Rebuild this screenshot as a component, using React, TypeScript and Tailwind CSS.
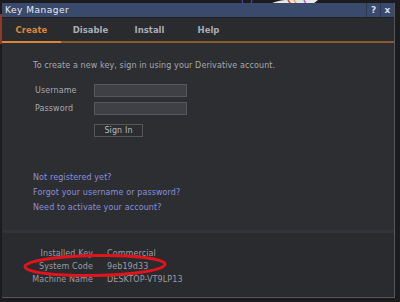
import React from 'react';

const tabs = ['Create', 'Disable', 'Install', 'Help'];

const links = [
    'Not registered yet?',
    'Forgot your username or password?',
    'Need to activate your account?'
];

const info = [
    {label: 'Installed Key', value: 'Commercial'},
    {label: 'System Code', value: '9eb19d33'},
    {label: 'Machine Name', value: 'DESKTOP-VT9LP13'}
];

const App: React.FC = () => {
    return (
        <div
            className="relative w-[400px] h-[302px] bg-[#1c1c1f] overflow-hidden"
            style={{fontFamily: '"DejaVu Sans", Verdana, sans-serif'}}
        >
            {/* bits of the app behind the window */}
            <svg className="absolute left-0 top-0" width="400" height="10">
                <circle cx="247" cy="0" r="5" fill="none" stroke="#5a4fc8" strokeWidth="1"/>
                <path d="M266 6 Q280 -2 300 0 L318 0 Q312 6 300 7 Z" fill="#e8e8e8"/>
                <path d="M288 0 L292 6" stroke="#e0502a" strokeWidth="1.5"/>
                <path d="M294 0 L297 5" stroke="#e8b43a" strokeWidth="1.5"/>
                <path d="M304 0 L306 4" stroke="#b060c0" strokeWidth="1.5"/>
            </svg>
            <div className="absolute left-0 top-[14px] w-[2px] h-[30px] bg-[#8a3a30]"/>

            {/* window */}
            <div className="absolute left-[2px] top-[3px] w-[393px] h-[295px] flex flex-col border-r border-b border-[#55575c] bg-[#2a2b2f]">
                {/* title bar */}
                <div className="h-[15px] flex items-stretch bg-[#3a4a6c] border-b border-[#222]">
                    <div className="flex-1 pl-[3px] text-[9px] leading-[15px] tracking-[0.5px] text-[#e6e8ee]">
                        Key Manager
                    </div>
                    <div className="w-[14px] border-l border-[#2c3850] text-[9px] font-bold leading-[15px] text-center text-[#d8dce6]">?</div>
                    <div className="w-[14px] border-l border-[#2c3850] text-[9px] font-bold leading-[15px] text-center text-[#d8dce6]">x</div>
                </div>

                {/* tabs */}
                <div className="h-[25px] flex bg-[#2a2b2f] border-b-2 border-[#8a5a30]">
                    {tabs.map((tab, i) => (
                        <div
                            key={tab}
                            className={`relative w-[59px] h-full flex items-center justify-center text-[8.5px] font-bold ${
                                i === 0 ? 'text-[#d9863a]' : 'text-[#a9acb4]'
                            }`}
                        >
                            <span className="relative top-[1px]">{tab}</span>
                            {i === 0 && <div className="absolute left-0 right-0 bottom-[-2px] h-[2px] bg-[#d9863a]"/>}
                        </div>
                    ))}
                </div>

                {/* content */}
                <div className="h-[190px] bg-[#2d2e32] border-b-[3px] border-[#323338] pl-[31px] pt-[17px] text-[8px] tracking-[0.1px] text-[#a6a9b0]">
                    <div>To create a new key, sign in using your Derivative account.</div>
                    <div className="mt-[12px] flex flex-col gap-[5px] pl-[2px]">
                        <div className="flex items-center">
                            <span className="w-[59px]">Username</span>
                            <div className="w-[93px] h-[13px] bg-[#3e4045] border border-[#55575c]"/>
                        </div>
                        <div className="flex items-center">
                            <span className="w-[59px]">Password</span>
                            <div className="w-[93px] h-[13px] bg-[#3e4045] border border-[#55575c]"/>
                        </div>
                        <div className="flex">
                            <div className="ml-[59px] mt-[4px] w-[49px] h-[13px] border border-[#55575c] bg-[#2c2d31] text-[8px] leading-[11px] text-center text-[#b8bbc2]">
                                Sign In
                            </div>
                        </div>
                    </div>
                    <div className="mt-[35px] flex flex-col gap-[3px] text-[#8a8fdc]">
                        {links.map(link => (
                            <div key={link} className="leading-[12px]">{link}</div>
                        ))}
                    </div>
                </div>

                {/* footer */}
                <div className="flex-1 pt-[14px] text-[8px] tracking-[0.1px] text-[#9a9da5]">
                    {info.map(row => (
                        <div key={row.label} className="flex leading-[13px]">
                            <span className="w-[91px] text-right">{row.label}</span>
                            <span className="ml-[14px]">{row.value}</span>
                        </div>
                    ))}
                </div>
            </div>

            {/* red marker round the system code */}
            <svg className="absolute left-[22px] top-[253px]" width="148" height="26">
                <ellipse cx="73" cy="12.5" rx="70" ry="10" fill="none" stroke="#e0141c" strokeWidth="3"
                         transform="rotate(-1 73 13)"/>
            </svg>
        </div>
    );
};

export default App;
